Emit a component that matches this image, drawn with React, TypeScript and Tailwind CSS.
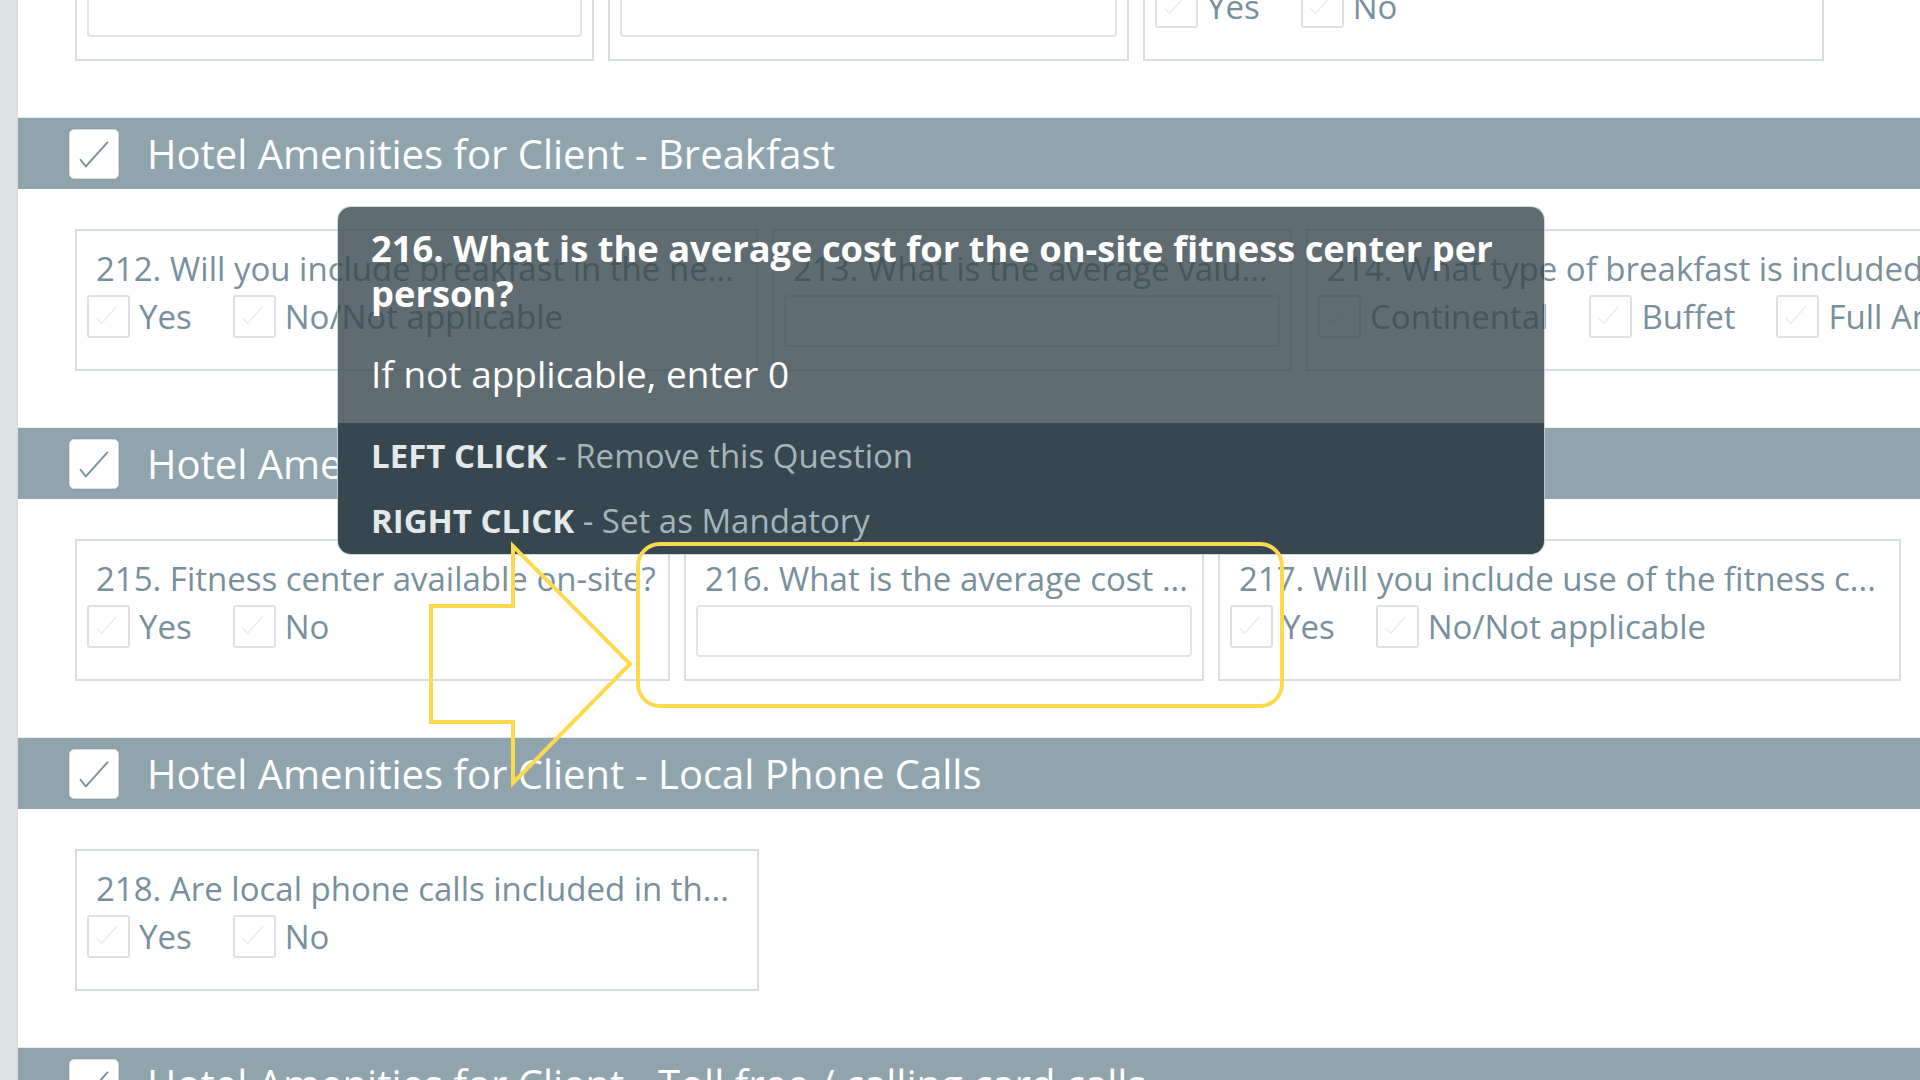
import React from "react";

type Opt = { label: string };
type CardData = {
  title: string;
  width: string;
  kind: "input" | "options";
  options?: Opt[];
};

const HeaderBox = () => (
  <div className="w-[50px] h-[50px] shrink-0 rounded-[5px] bg-white border border-[#d9dfe2] shadow-[0_0_2px_rgba(0,0,0,0.15)]">
    <svg viewBox="0 0 50 50" className="w-full h-full">
      <path d="M11 31 L16.5 38 L39 13" fill="none" stroke="#78909c" strokeWidth="2" strokeLinecap="round" strokeLinejoin="round" />
    </svg>
  </div>
);

const CardBox = () => (
  <div className="w-[43px] h-[43px] shrink-0 rounded-[3px] bg-white border-2 border-[#e0e0e0]">
    <svg viewBox="0 0 43 43" className="w-full h-full">
      <path d="M9 24 L14 29 L30 11" fill="none" stroke="#ececec" strokeWidth="1.5" strokeLinecap="round" strokeLinejoin="round" />
    </svg>
  </div>
);

const Card = ({ card }: { card: CardData }) => (
  <div className={`${card.width} h-[142px] shrink-0 border-2 border-[#d6dee2] bg-white px-[10px] pt-[18px]`}>
    <div className="pl-[9px] text-[33px] leading-[40px] text-[#78909c] whitespace-nowrap overflow-hidden">
      {card.title}
    </div>
    {card.kind === "input" ? (
      <div className="mt-[6px] h-[52px] rounded-[4px] border-2 border-[#e2e2e2] bg-white" />
    ) : (
      <div className="mt-[6px] flex items-center whitespace-nowrap">
        {card.options?.map((o) => (
          <div key={o.label} className="flex items-center mr-[41px]">
            <CardBox />
            <span className="ml-[9px] text-[33px] leading-[43px] text-[#78909c]">{o.label}</span>
          </div>
        ))}
      </div>
    )}
  </div>
);

const YesNo = [{ label: "Yes" }, { label: "No" }];
const YesNA = [{ label: "Yes" }, { label: "No/Not applicable" }];

const rows: { header?: string; cards: CardData[] }[] = [
  {
    cards: [
      { title: "209. What is the average rate...", width: "w-[519px]", kind: "input" },
      { title: "210. What is the average tax...", width: "w-[521px]", kind: "input" },
      { title: "211. Is parking included in the...", width: "w-[681px]", kind: "options", options: YesNo },
    ],
  },
  {
    header: "Hotel Amenities for Client - Breakfast",
    cards: [
      { title: "212. Will you include breakfast in the ne...", width: "w-[683px]", kind: "options", options: YesNA },
      { title: "213. What is the average valu...", width: "w-[520px]", kind: "input" },
      {
        title: "214. What type of breakfast is included in th...",
        width: "w-[681px]",
        kind: "options",
        options: [{ label: "Continental" }, { label: "Buffet" }, { label: "Full American" }],
      },
    ],
  },
  {
    header: "Hotel Amenities for Client - Fitness Center",
    cards: [
      { title: "215. Fitness center available on-site?", width: "w-[595px]", kind: "options", options: YesNo },
      { title: "216. What is the average cost ...", width: "w-[520px]", kind: "input" },
      { title: "217. Will you include use of the fitness c...", width: "w-[683px]", kind: "options", options: YesNA },
    ],
  },
  {
    header: "Hotel Amenities for Client - Local Phone Calls",
    cards: [{ title: "218. Are local phone calls included in th...", width: "w-[684px]", kind: "options", options: YesNo }],
  },
  {
    header: "Hotel Amenities for Client - Toll free / calling card calls",
    cards: [{ title: "219. Are toll free calls included in th...", width: "w-[684px]", kind: "options", options: YesNo }],
  },
];

const SectionHeader = ({ title }: { title: string }) => (
  <div className="h-[72px] flex items-center pl-[51px] bg-[#90a4ae] border-t border-[#e4eaed]">
    <HeaderBox />
    <span className="ml-[28px] text-[40px] leading-none text-white whitespace-nowrap">{title}</span>
  </div>
);

const Tooltip = () => (
  <div className="absolute left-[338px] top-[207px] w-[1206px] rounded-[13px] overflow-hidden shadow-[0_0_0_1px_rgba(200,206,210,0.8)]">
    <div className="h-[216px] bg-[#37474f]/80 px-[33px] pt-[19px]">
      <div className="text-[36.3px] leading-[45px] font-bold text-white">
        216. What is the average cost for the on-site fitness center per person?
      </div>
      <div className="mt-[35px] text-[37px] leading-[45px] text-white">If not applicable, enter 0</div>
    </div>
    <div className="h-[131px] bg-[#37474f] px-[33px] text-[33px]">
      <div className="leading-[65px] whitespace-nowrap">
        <span className="font-bold text-[#e3e8ea]">LEFT CLICK</span>
        <span className="text-[#a4b4bb]"> - Remove this Question</span>
      </div>
      <div className="leading-[65px] whitespace-nowrap">
        <span className="font-bold text-[#e3e8ea]">RIGHT CLICK</span>
        <span className="text-[#a4b4bb]"> - Set as Mandatory</span>
      </div>
    </div>
  </div>
);

const Annotation = () => (
  <svg className="absolute left-0 top-0 pointer-events-none" width="1920" height="1080" viewBox="0 0 1920 1080">
    <polygon
      points="431,606 513,606 513,546 630,664 513,783 513,722 431,722"
      fill="none"
      stroke="#fdd94f"
      strokeWidth="4"
      strokeLinejoin="miter"
    />
    <rect x="638" y="544" width="644" height="162" rx="22" fill="none" stroke="#fdd94f" strokeWidth="4" />
  </svg>
);

export default function App() {
  return (
    <div className="relative flex w-[1920px] h-[1080px] overflow-hidden bg-white font-['Open_Sans','Noto_Sans',sans-serif]">
      <div className="w-[18px] shrink-0 bg-[#dde2e5] border-r border-[#d2d8dc]" />
      <div className="flex-1 min-w-0">
        <div className="-mt-[81px]">
          {rows.map((row, i) => (
            <div key={i}>
              {row.header && <SectionHeader title={row.header} />}
              <div className={`flex gap-[14px] pl-[57px] pb-[56px] ${row.header ? "pt-[40px]" : ""}`}>
                {row.cards.map((c) => (
                  <Card key={c.title} card={c} />
                ))}
              </div>
            </div>
          ))}
        </div>
      </div>
      <Tooltip />
      <Annotation />
    </div>
  );
}
